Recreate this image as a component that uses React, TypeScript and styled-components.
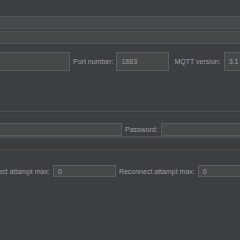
import React from 'react';
import styled, { createGlobalStyle } from 'styled-components';

const GlobalStyle = createGlobalStyle`
    html, body {
        margin: 0;
        padding: 0;
        background: #3c3f41;
    }
`;

const Page = styled.div`
    width: 240px;
    height: 240px;
    overflow: hidden;
    background: #3c3f41;
    display: flex;
    flex-direction: column;
    font-family: "Liberation Sans", Arial, sans-serif;
    font-size: 7px;
    color: #9c9ea0;
`;

const Spacer = styled.div<{ $h: number }>`
    height: ${(p) => p.$h}px;
    flex: none;
`;

const Line = styled.div<{ $h?: number; $color?: string }>`
    height: ${(p) => p.$h ?? 1}px;
    background: ${(p) => p.$color ?? '#4a4d4f'};
    flex: none;
`;

const WideField = styled.div<{ $h: number }>`
    height: ${(p) => p.$h}px;
    margin: 0 -2px;
    background: #45494a;
    border: 1px solid #515557;
    box-sizing: border-box;
    flex: none;
`;

const Row = styled.div<{ $h: number; $shift?: number }>`
    display: flex;
    align-items: center;
    height: ${(p) => p.$h}px;
    margin-left: ${(p) => p.$shift ?? 0}px;
    flex: none;
    white-space: nowrap;
`;

const Field = styled.div<{ $w: number }>`
    width: ${(p) => p.$w}px;
    height: 100%;
    flex: none;
    box-sizing: border-box;
    background: #45494a;
    border: 1px solid #595d5f;
    padding-left: 4px;
    display: flex;
    align-items: center;
    color: #9c9ea0;
`;

const Label = styled.span<{ $ml?: number; $mr?: number }>`
    flex: none;
    margin-left: ${(p) => p.$ml ?? 3}px;
    margin-right: ${(p) => p.$mr ?? 3}px;
`;

export default function App() {
    return (
        <>
            <GlobalStyle />
            <Page>
                <Spacer $h={16} />
                <WideField $h={13} />
                <Spacer $h={2} />
                <WideField $h={13} />
                <Spacer $h={8} />
                <Row $h={19} $shift={-2}>
                    <Field $w={72} />
                    <Label>Port number:</Label>
                    <Field $w={53}>1883</Field>
                    <Label $ml={5}>MQTT version:</Label>
                    <Field $w={40}>3.1</Field>
                </Row>
                <Spacer $h={40} />
                <Line />
                <Spacer $h={3} />
                <Line $h={2} $color="#404345" />
                <Spacer $h={6} />
                <Row $h={13} $shift={-2}>
                    <Field $w={124} />
                    <Label>Password:</Label>
                    <Field $w={90} />
                </Row>
                <Line $h={2} $color="#4c5052" />
                <Spacer $h={6} />
                <Line $h={5} $color="#393b3d" />
                <Line $color="#4a4d4f" />
                <Spacer $h={15} />
                <Row $h={12} $shift={-26}>
                    <Label $ml={0}>Reconnect attampt max:</Label>
                    <Field $w={63}>0</Field>
                    <Label>Reconnect attampt max:</Label>
                    <Field $w={50}>0</Field>
                </Row>
            </Page>
        </>
    );
}
